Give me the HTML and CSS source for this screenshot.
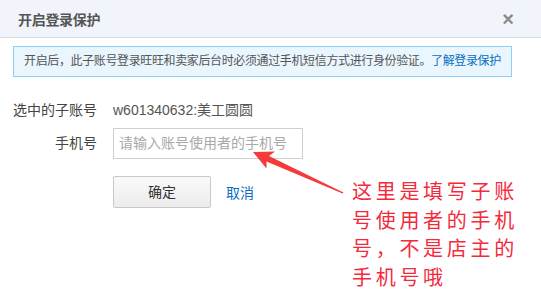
FILE: index.html
```html
<!DOCTYPE html>
<html lang="zh">
<head>
<meta charset="utf-8">
<link rel="stylesheet" href="styles.css">
</head>
<body>
<div class="dialog">
  <div class="header">
    <span class="title">开启登录保护</span>
    <span class="close">×</span>
  </div>
  <div class="content">
    <div class="notice">开启后，此子账号登录旺旺和卖家后台时必须通过手机短信方式进行身份验证。<a class="link">了解登录保护</a></div>
    <div class="form">
      <div class="label">选中的子账号</div>
      <div class="value">w601340632:美工圆圆</div>
      <div class="label right">手机号</div>
      <div class="field"><div class="input">请输入账号使用者的手机号</div></div>
      <div></div>
      <div class="actions"><div class="btn">确定</div><a class="cancel">取消</a></div>
    </div>
  </div>
  <svg class="arrow" width="541" height="298" viewBox="0 0 541 298">
    <polygon points="253,152 275,151.5 269,156 343.4,192.4 342.6,193.6 266.5,161.5 266.5,168.5" fill="#f43a3a"/>
  </svg>
  <div class="annotation">这里是填写子账<br>号使用者的手机<br>号，不是店主的<br>手机号哦</div>
</div>
</body>
</html>
```
FILE: styles.css
```css
html, body {
  margin: 0;
  padding: 0;
  background: #fff;
}
body {
  font-family: "Liberation Sans", "Noto Sans CJK SC", sans-serif;
  width: 541px;
  height: 298px;
  overflow: hidden;
}
.dialog {
  position: relative;
  width: 541px;
  height: 298px;
}
.header {
  background: #f1f5fb;
  border-bottom: 1px solid #d9dde2;
  display: flex;
  align-items: center;
  justify-content: space-between;
  padding: 0 27px 0 18px;
  box-sizing: border-box;
  height: 38px;
}
.title {
  font-size: 14px;
  font-weight: bold;
  color: #555;
  letter-spacing: -0.3px;
}
.close {
  font-size: 20px;
  font-weight: bold;
  color: #8a8a8a;
  line-height: 1;
}
.content {
  padding: 8px 29px 0 13px;
}
.notice {
  height: 31px;
  box-sizing: border-box;
  border: 1px solid #8dcff6;
  background: #e9f6fe;
  padding-left: 10px;
  font-size: 12px;
  letter-spacing: -0.37px;
  color: #555;
  line-height: 29px;
}
.link {
  color: #0a6fc2;
}
.form {
  display: grid;
  grid-template-columns: 84px 1fr;
  column-gap: 16px;
  margin-top: 23px;
  font-size: 14px;
  color: #444;
}
.label {
  height: 20px;
  line-height: 20px;
  white-space: nowrap;
}
.value {
  height: 20px;
  line-height: 20px;
  color: #555;
}
.right {
  text-align: right;
  margin-top: 8px;
  height: 30px;
  line-height: 30px;
}
.field {
  margin-top: 8px;
}
.input {
  width: 190px;
  height: 31px;
  box-sizing: border-box;
  border: 1px solid #d0d0d0;
  padding-left: 5px;
  line-height: 29px;
  color: #a9a9a9;
  font-size: 14px;
}
.actions {
  margin-top: 17px;
  display: flex;
  align-items: center;
  gap: 15px;
}
.btn {
  width: 98px;
  height: 32px;
  box-sizing: border-box;
  border: 1px solid #c8c8c8;
  border-radius: 2px;
  background: linear-gradient(#fafafa, #ececec);
  text-align: center;
  line-height: 30px;
  color: #333;
  font-size: 14px;
}
.cancel {
  color: #0a6fc2;
  font-size: 14px;
}
.arrow {
  position: absolute;
  left: 0;
  top: 0;
}
.annotation {
  position: absolute;
  left: 352px;
  top: 178px;
  font-size: 20px;
  line-height: 28.5px;
  letter-spacing: 3.7px;
  color: #f42a3c;
  white-space: nowrap;
}
```
